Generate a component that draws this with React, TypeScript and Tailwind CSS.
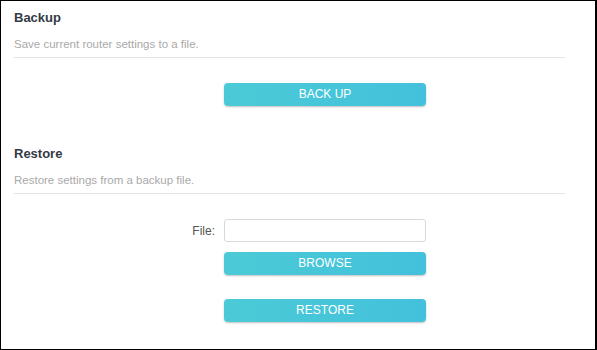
import React from "react";

const font = { fontFamily: '"Liberation Sans", Arial, sans-serif' };

function Btn({ label }: { label: string }) {
  return (
    <button
      type="button"
      className="w-[202px] h-[23px] rounded-[4px] bg-gradient-to-r from-[#4bcad6] to-[#43c1dc] text-white text-[12px] leading-[23px] text-center shadow-[0_1px_2px_rgba(0,0,0,0.25)]"
    >
      {label}
    </button>
  );
}

export default function App() {
  return (
    <div
      className="w-[597px] h-[350px] border border-black border-r-2 bg-white pl-[13px] pr-[30px] pt-[8px] box-border"
      style={font}
    >
      <div className="text-[13px] leading-[17px] font-bold text-[#333a44]">Backup</div>
      <div className="mt-[10px] text-[11.5px] leading-[16px] text-[#a9a9a9] pb-[5px] border-b border-[#e3e3e3]">
        Save current router settings to a file.
      </div>
      <div className="flex mt-[25px]">
        <div className="w-[210px] shrink-0" />
        <Btn label="BACK UP" />
      </div>

      <div className="mt-[39px] text-[13px] leading-[17px] font-bold text-[#333a44]">Restore</div>
      <div className="mt-[10px] text-[11.5px] leading-[16px] text-[#a9a9a9] pb-[5px] border-b border-[#e3e3e3]">
        Restore settings from a backup file.
      </div>
      <div className="flex items-center mt-[25px]">
        <div className="w-[210px] shrink-0 pr-[9px] text-right text-[12px] text-[#555]">File:</div>
        <div className="w-[202px] h-[23px] rounded-[3px] border border-[#d9d9d9] bg-white box-border" />
      </div>
      <div className="flex mt-[10px]">
        <div className="w-[210px] shrink-0" />
        <Btn label="BROWSE" />
      </div>
      <div className="flex mt-[24px]">
        <div className="w-[210px] shrink-0" />
        <Btn label="RESTORE" />
      </div>
    </div>
  );
}
